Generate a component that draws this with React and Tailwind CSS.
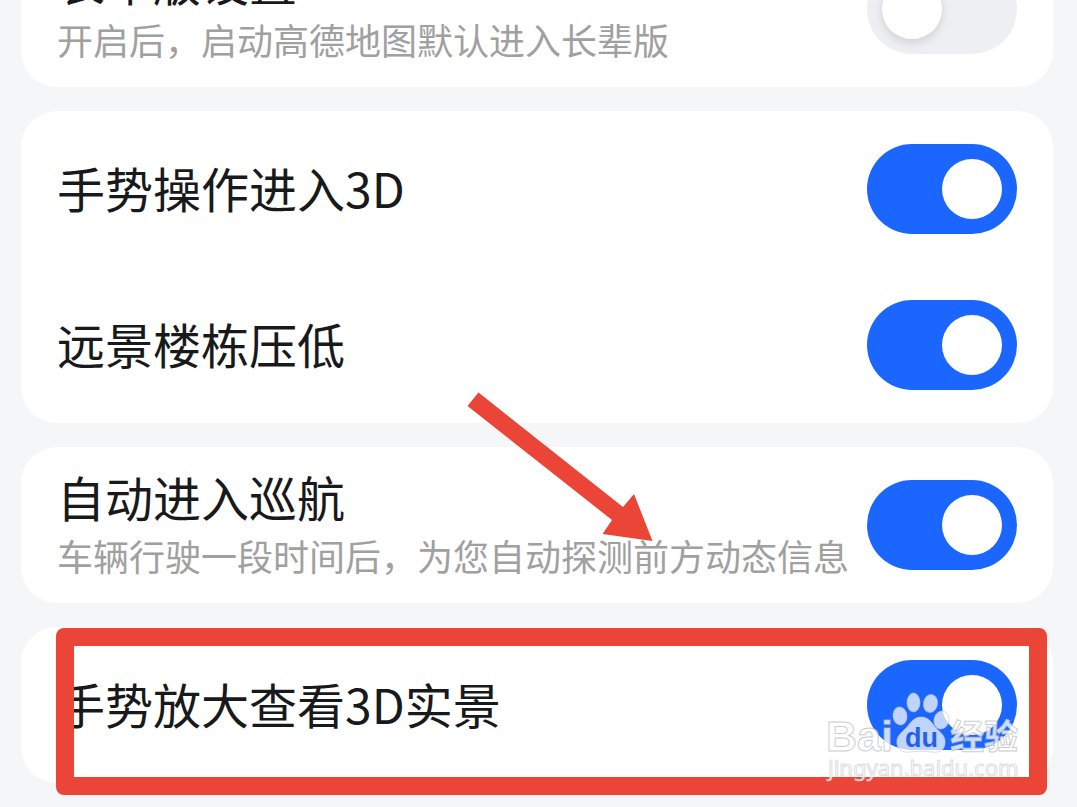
import { useState } from 'react';

const groups = [
    [
        { id: 'elder', title: '长辈版设置', desc: '开启后，启动高德地图默认进入长辈版', on: false },
    ],
    [
        { id: 'gesture3d', title: '手势操作进入3D', on: true },
        { id: 'lowrise', title: '远景楼栋压低', on: true },
    ],
    [
        { id: 'cruise', title: '自动进入巡航', desc: '车辆行驶一段时间后，为您自动探测前方动态信息', on: true },
    ],
    [
        { id: 'street3d', title: '手势放大查看3D实景', on: true },
    ],
];

const Switch = ({ id, defaultOn }) => {
    const [on, setOn] = useState(defaultOn);

    return (
        <span className="relative h-[90px] w-[150px] shrink-0">
            <input
                id={id}
                type="checkbox"
                role="switch"
                checked={on}
                onChange={() => setOn(!on)}
                className="peer block h-full w-full cursor-pointer appearance-none rounded-full bg-[#eeeff3] checked:bg-[#1b66ff]"
            />
            <span className="pointer-events-none absolute left-[15px] top-[15px] h-[60px] w-[60px] rounded-full bg-white shadow-[0_4px_10px_rgba(0,0,0,0.12)] peer-checked:left-[75px] peer-checked:shadow-none" />
        </span>
    );
};

const SettingRow = ({ item }) => (
    <div className="flex h-[156px] items-center justify-between px-9">
        <label htmlFor={item.id} className="flex cursor-pointer flex-col gap-1 pb-1 whitespace-nowrap">
            <span className="text-5xl leading-[60px] text-[#18191b]">{item.title}</span>
            {item.desc && (
                <span className="text-4xl leading-[50px] text-[#a0a0a0]">{item.desc}</span>
            )}
        </label>
        <Switch id={item.id} defaultOn={item.on} />
    </div>
);

const Arrow = () => (
    <svg className="pointer-events-none absolute -top-15 left-[439px] z-10 h-[160px] w-[200px]" viewBox="0 0 200 160" aria-hidden="true">
        <path d="M18.5 5.5 163 120 174 107 192.5 154 142.5 147 152 133 7.5 19Z" fill="#ea4537" />
    </svg>
);

// Paw logo with the site name next to it
const Watermark = () => (
    <svg className="pointer-events-none absolute right-7 -bottom-2 z-20 h-[104px] w-[204px]" viewBox="0 0 204 104" role="img" aria-label="Baidu 经验">
        <g fill="#fff" fillOpacity="0.72" stroke="#c4c6cc" strokeOpacity="0.6" strokeWidth="1">
            <ellipse cx="79" cy="29" rx="7" ry="9" transform="rotate(-8 79 29)" />
            <ellipse cx="92.5" cy="15.5" rx="6.5" ry="9.5" />
            <ellipse cx="109.500" cy="16.5" rx="7" ry="9" transform="rotate(10 109.5 16.5)" />
            <ellipse cx="120.500" cy="33" rx="7.5" ry="9" transform="rotate(14 120.5 33)" />
            <path d="M100 30c-8 0-11 7-15 11-5 5-10 8-9 16 1 6 6 9 12 8 8-1 15-1 23 0 7 1 12-1 13-8 1-8-4-11-9-16-5-6-7-11-15-11Z" />
        </g>
        <g fill="#fff" fillOpacity="0.8" stroke="#b4b6bc" strokeOpacity="0.7" strokeWidth="1" fontWeight="700">
            <text x="5" y="64" fontSize="43" fontFamily="Liberation Sans, sans-serif">Bai</text>
            <text x="129" y="62" fontSize="34" fontFamily="Noto Sans CJK SC, sans-serif">经验</text>
        </g>
        <text x="84" y="60" fontSize="27" fontWeight="700" fill="#2460e6" fontFamily="Liberation Sans, sans-serif">du</text>
        <text x="7" y="89" fontSize="22" fill="#fff" fillOpacity="0.8" stroke="#c4c6cc" strokeOpacity="0.6" strokeWidth="1" fontFamily="Noto Sans, sans-serif">jingyan.baidu.com</text>
    </svg>
);

export default function App() {
    return (
        <div className="min-h-screen overflow-hidden bg-[#f5f6f8] font-['Noto_Sans_CJK_SC',sans-serif]">
            <main className="-mt-[69px] flex flex-col gap-6 pr-6 pb-6 pl-[21px]">
                {groups.map((items, index) => (
                    <section key={index} className="relative rounded-[36px] bg-white">
                        {items.map(item => <SettingRow key={item.id} item={item} />)}
                        {index === 2 && <Arrow />}
                        {index === 3 && (
                            <>
                                <div className="pointer-events-none absolute top-px right-[6px] -bottom-3 left-[35px] rounded-lg border-[18px] border-[#ea4537]" />
                                <Watermark />
                            </>
                        )}
                    </section>
                ))}
            </main>
        </div>
    );
}
